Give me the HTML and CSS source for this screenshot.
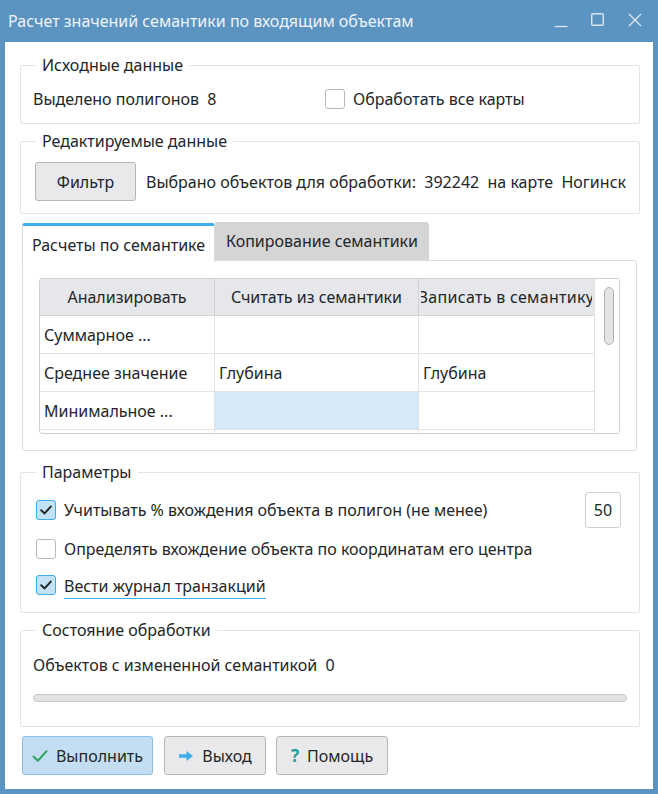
FILE: index.html
```html
<!DOCTYPE html>
<html lang="ru">
<head>
<meta charset="utf-8">
<title>Расчет значений семантики по входящим объектам</title>
<link rel="stylesheet" href="styles.css">
</head>
<body>
<div class="window">
  <div class="titlebar">
    <span class="title">Расчет значений семантики по входящим объектам</span>
    <div class="wbtns">
      <svg class="wb wb-min" width="14" height="14" viewBox="0 0 14 14"><path d="M0.5 12.5H13.5" stroke="#dbe4ee" stroke-width="1.4" fill="none"/></svg>
      <svg class="wb wb-max" width="13" height="13" viewBox="0 0 13 13"><rect x="0.7" y="0.7" width="11.6" height="11.6" rx="1.2" stroke="#dbe4ee" stroke-width="1.4" fill="none"/></svg>
      <svg class="wb wb-close" width="14" height="14" viewBox="0 0 14 14"><path d="M1 1L13 13M13 1L1 13" stroke="#dbe4ee" stroke-width="1.4" fill="none"/></svg>
    </div>
  </div>
  <div class="client">
    <fieldset class="group g1">
      <legend>Исходные данные</legend>
      <div class="row-src">
        <span class="txt">Выделено полигонов  8</span>
        <label class="check"><span class="box"></span><span>Обработать все карты</span></label>
      </div>
    </fieldset>

    <fieldset class="group g2">
      <legend>Редактируемые данные</legend>
      <div class="row-edit">
        <button class="btn btn-filter">Фильтр</button>
        <span class="txt">Выбрано объектов для обработки:  392242  на карте  Ногинск</span>
      </div>
    </fieldset>

    <div class="tabs">
      <div class="tabbar">
        <div class="tab active">Расчеты по семантике</div>
        <div class="tab">Копирование семантики</div>
      </div>
      <div class="pane">
        <div class="table">
          <div class="grid">
            <div class="tr head">
              <div class="th c1">Анализировать</div>
              <div class="th c2">Считать из семантики</div>
              <div class="th c3"><div class="clip"><span>Записать в семантику</span></div></div>
            </div>
            <div class="tr">
              <div class="td c1">Суммарное ...</div>
              <div class="td c2"></div>
              <div class="td c3"></div>
            </div>
            <div class="tr">
              <div class="td c1">Среднее значение</div>
              <div class="td c2">Глубина</div>
              <div class="td c3">Глубина</div>
            </div>
            <div class="tr">
              <div class="td c1">Минимальное ...</div>
              <div class="td c2 sel"></div>
              <div class="td c3"></div>
            </div>
            <div class="tr">
              <div class="td c1"></div>
              <div class="td c2"></div>
              <div class="td c3"></div>
            </div>
          </div>
          <div class="vscroll"><div class="handle"></div></div>
        </div>
      </div>
    </div>

    <fieldset class="group g3">
      <legend>Параметры</legend>
      <div class="prow">
        <label class="check"><span class="box on"><svg width="20" height="20" viewBox="0 0 20 20"><path d="M5.2 10.2L8.6 13.4L14.8 6.6" stroke="#232629" stroke-width="2" fill="none" stroke-linecap="round" stroke-linejoin="round"/></svg></span><span>Учитывать % вхождения объекта в полигон (не менее)</span></label>
        <div class="spin">50</div>
      </div>
      <div class="prow r2">
        <label class="check"><span class="box"></span><span>Определять вхождение объекта по координатам его центра</span></label>
      </div>
      <div class="prow">
        <label class="check"><span class="box on"><svg width="20" height="20" viewBox="0 0 20 20"><path d="M5.2 10.2L8.6 13.4L14.8 6.6" stroke="#232629" stroke-width="2" fill="none" stroke-linecap="round" stroke-linejoin="round"/></svg></span><span class="focus">Вести журнал транзакций</span></label>
      </div>
    </fieldset>

    <fieldset class="group g4">
      <legend>Состояние обработки</legend>
      <div class="status">Объектов с измененной семантикой  0</div>
      <div class="progress"></div>
    </fieldset>

    <div class="actions">
      <button class="btn btn-ok"><svg width="16" height="14" viewBox="0 0 16 14"><path d="M1.5 7.5L5.8 11.8L14.5 2.2" stroke="#2aa05a" stroke-width="2" fill="none" stroke-linecap="round" stroke-linejoin="round"/></svg><span>Выполнить</span></button>
      <button class="btn btn-exit"><svg width="16" height="12" viewBox="0 0 16 12"><path d="M1 4.3H8.5V1L15 6L8.5 11V7.7H1Z" fill="#3daee9"/></svg><span>Выход</span></button>
      <button class="btn btn-help"><span class="q">?</span><span>Помощь</span></button>
    </div>
  </div>
</div>
</body>
</html>
```

FILE: styles.css
```css
* { box-sizing: border-box; }

html, body {
  margin: 0;
  padding: 0;
}

body {
  width: 658px;
  height: 794px;
  background: #5b93c1;
  font-family: "Noto Sans", "Open Sans", sans-serif;
  font-size: 16px;
  color: #232629;
  overflow: hidden;
}

.window {
  width: 658px;
  height: 794px;
  padding: 0 5px 5px 5px;
  display: flex;
  flex-direction: column;
}

.titlebar {
  height: 42px;
  display: flex;
  align-items: center;
  padding-left: 3px;
  color: #eef3f8;
}

.title {
  flex: 1;
  font-size: 16px;
  margin-top: -1px;
}

.wbtns {
  display: flex;
  align-items: flex-start;
  height: 14px;
  margin-top: -4px;
}

.wb { display: block; }
.wb-min { margin-right: 23px; margin-top: 2px; }
.wb-max { margin-right: 24px; margin-top: 1px; }
.wb-close { margin-right: 11px; margin-top: 1px; }

.client {
  flex: 1;
  background: #ffffff;
  padding: 0 13px 0 15px;
  display: flex;
  flex-direction: column;
}

.group {
  margin: 0;
  border: 1px solid #e3e3e3;
  border-radius: 2px;
  padding: 0 12px;
  min-width: 0;
}

.group legend {
  padding: 0 6px;
  margin-left: 3px;
  line-height: 22px;
  height: 22px;
}

.txt { white-space: pre; }

/* group 1 */
.g1 { margin-top: 12px; padding-top: 8px; padding-bottom: 9px; }
.row-src {
  height: 30px;
  display: grid;
  grid-template-columns: 292px auto;
  align-items: center;
}

.check {
  display: flex;
  align-items: center;
  gap: 8px;
}

.box {
  width: 20px;
  height: 20px;
  border: 1px solid #b8b8b8;
  border-radius: 3px;
  background: #fff;
  flex: none;
  position: relative;
}

.box.on {
  background: #c4e2f6;
  border-color: #3daee9;
}

.box svg {
  display: block;
  margin: -1px;
}

/* group 2 */
.g2 { margin-top: 6px; padding-top: 10px; padding-bottom: 12px; }
.row-edit {
  display: flex;
  align-items: center;
  gap: 10px;
}

.btn {
  font-family: inherit;
  font-size: 16px;
  color: #232629;
  background: #e9e9ec;
  border: 1px solid #b6b6b8;
  border-radius: 3px;
  height: 39px;
  padding: 0;
  display: flex;
  align-items: center;
  justify-content: center;
}

.btn-filter { width: 101px; margin-left: 2px; }

/* tabs */
.tabs {
  margin-top: 8px;
  margin-left: 2px;
  margin-right: 3px;
}

.tabbar {
  display: flex;
  height: 38px;
  position: relative;
  z-index: 1;
}

.tab {
  height: 38px;
  display: flex;
  align-items: center;
  white-space: nowrap;
}

.tab.active {
  width: 193px;
  background: #fff;
  border: 1px solid #d9d9d9;
  border-top: 3px solid #3daee9;
  border-bottom: none;
  border-radius: 3px 3px 0 0;
  height: 39px;
  margin-top: 1px;
  padding-top: 1px;
  justify-content: center;
}

.tab:not(.active) {
  width: 214px;
  background: #d5d5d5;
  border-radius: 0 3px 0 0;
  justify-content: center;
  padding: 0;
}

.pane {
  height: 191px;
  border: 1px solid #dcdcdc;
  border-radius: 0 3px 3px 3px;
  padding: 17px 16px 16px 16px;
  background: #fff;
}

.table {
  height: 156px;
  border: 1px solid #cfcfcf;
  border-radius: 3px;
  display: flex;
  overflow: hidden;
}

.grid {
  width: 555px;
  border-right: 1px solid #e2e2e2;
  overflow: hidden;
}

.tr {
  display: grid;
  grid-template-columns: 175px 204px 175px;
  height: 38px;
  border-bottom: 1px solid #e2e2e2;
}

.tr.head {
  height: 37px;
  background: #e5e7eb;
  border-bottom: 1px solid #d6d6d6;
}

.th, .td {
  border-right: 1px solid #e2e2e2;
  display: flex;
  align-items: center;
  white-space: nowrap;
  overflow: hidden;
}

.th {
  justify-content: center;
  border-right-color: #d2d2d2;
}

.th.c3 { padding: 0 2px 0 2px; }

.clip {
  width: 100%;
  height: 100%;
  overflow: hidden;
  display: flex;
  align-items: center;
  justify-content: center;
}

.clip span {
  flex: none;
  letter-spacing: 0.3px;
}

.td { padding-left: 4px; }
.c3 { border-right: none; }
.td.sel { background: #d6e9f8; }

.vscroll {
  flex: 1;
  position: relative;
  padding: 8px 0 0 9px;
}

.handle {
  width: 10px;
  height: 58px;
  border: 1px solid #b4b4b4;
  border-radius: 5px;
  background: #e4e4e4;
}

/* group 3 */
.g3 { margin-top: 10px; padding-top: 9px; padding-bottom: 9px; }

.prow {
  height: 36px;
  display: flex;
  align-items: center;
  padding-left: 3px;
}

.prow.r2 { margin-top: 3px; }

.spin {
  margin-left: auto;
  margin-right: 6px;
  width: 36px;
  height: 36px;
  border: 1px solid #cfcfcf;
  border-radius: 3px;
  display: flex;
  align-items: center;
  justify-content: center;
}

.focus {
  border-bottom: 1px solid #3daee9;
  padding-bottom: 2px;
  margin-top: 5px;
  line-height: 20px;
}

/* group 4 */
.g4 { margin-top: 6px; padding-top: 12px; padding-bottom: 24px; }

.status {
  height: 24px;
  line-height: 24px;
  white-space: pre;
}

.progress {
  margin-top: 17px;
  height: 8px;
  border: 1px solid #c9c9c9;
  border-radius: 4px;
  background: #e3e3e3;
}

/* actions */
.actions {
  margin-top: 9px;
  margin-left: 2px;
  display: flex;
  gap: 11px;
}

.actions .btn { gap: 8px; }

.btn-ok {
  width: 131px;
  background: #c3def2;
  border-color: #8dbde2;
}

.btn-exit { width: 102px; }
.btn-help { width: 112px; margin-left: -1px; }

.q {
  color: #1f9e9e;
  font-weight: bold;
  font-size: 17px;
}
```
